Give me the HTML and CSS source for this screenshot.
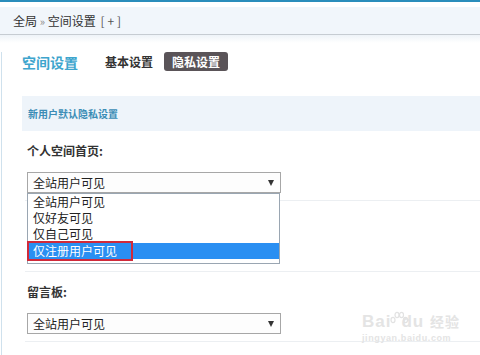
FILE: index.html
```html
<!DOCTYPE html>
<html lang="zh-CN">
  <head>
    <meta charset="UTF-8" />
    <title>空间设置 - 隐私设置</title>
    <link rel="stylesheet" href="styles.css">
  </head>
  <body>
    <div class="crumb">全局 <span class="sep">»</span> 空间设置 <span class="plus">[+]</span></div>
    <div class="crumb-shade"></div>

    <div class="main">
      <div class="tabs">
        <span class="tabs-title">空间设置</span>
        <a class="tab">基本设置</a>
        <a class="tab active">隐私设置</a>
      </div>

      <div class="section-head">新用户默认隐私设置</div>

      <div class="row">
        <div class="label">个人空间首页:</div>
        <div class="select open">
          <span>全站用户可见</span>
          <i class="arrow"></i>
          <ul class="options">
            <li>全站用户可见</li>
            <li>仅好友可见</li>
            <li>仅自己可见</li>
            <li class="selected">仅注册用户可见<b class="mark"></b></li>
          </ul>
        </div>
      </div>

      <div class="row empty"></div>

      <div class="row">
        <div class="label">留言板:</div>
        <div class="select">
          <span>全站用户可见</span>
          <i class="arrow"></i>
        </div>
      </div>
    </div>

    <div class="watermark">
      <div class="wm-logo">Bai<span class="paw">
        <svg width="20" height="14" viewBox="0 0 20 14">
          <ellipse cx="4" cy="9" rx="2" ry="2.6" fill="none" stroke="#e2e2e2" stroke-width="1.2"/>
          <ellipse cx="8" cy="4" rx="2" ry="2.6" fill="none" stroke="#e2e2e2" stroke-width="1.2"/>
          <ellipse cx="12.5" cy="4" rx="2" ry="2.6" fill="none" stroke="#e2e2e2" stroke-width="1.2"/>
          <ellipse cx="16.5" cy="9" rx="2" ry="2.6" fill="none" stroke="#e2e2e2" stroke-width="1.2"/>
        </svg></span>du <span class="wm-cn">经验</span></div>
      <div class="wm-url">jingyan.baidu.com</div>
    </div>
  </body>
</html>
```
FILE: styles.css
```css
html {
  font-family: "Noto Sans CJK SC", "Liberation Sans", sans-serif;
}

body {
  margin: 0;
  border-top: 2px solid #2a8dbb;
  background-color: #fff;
  color: #333;
  position: relative;
}

.crumb {
  margin-top: 5px;
  height: 27px;
  line-height: 27px;
  padding-left: 13px;
  font-size: 12px;
  background-color: #f1f6fb;
  border-bottom: 1px solid #c6ccd2;
  color: #333;
}

.crumb .sep {
  color: #888;
  font-size: 11px;
}

.crumb .plus {
  color: #555;
  letter-spacing: 3px;
  margin-left: 2px;
}

.crumb-shade {
  height: 8px;
  background: linear-gradient(#eef3f8, #fff);
}

.main {
  margin-left: 1px;
  border-left: 1px solid #cfe1ed;
  padding-left: 20px;
  height: 312px;
}

.tabs {
  display: flex;
  align-items: center;
  height: 19px;
  margin-top: 9px;
}

.tabs-title {
  font-size: 14px;
  font-weight: bold;
  color: #3ea5cd;
  margin-right: 27px;
}

.tab {
  font-size: 12px;
  font-weight: bold;
  color: #333;
  margin-right: 11px;
}

.tab.active {
  background-color: #5a5458;
  color: #fff;
  border-radius: 3px;
  padding: 0 8px;
  line-height: 19px;
}

.section-head {
  margin-top: 25px;
  height: 35px;
  line-height: 35px;
  padding-left: 6px;
  background-color: #eef4fa;
  font-size: 10px;
  font-weight: bold;
  color: #3b8db6;
}

.row {
  margin-left: 3px;
  padding: 13px 0 7px 2px;
  border-bottom: 1px solid #eceff2;
}

.row.empty {
  height: 50px;
}

.label {
  font-size: 12px;
  font-weight: bold;
  line-height: 14px;
  margin-bottom: 14px;
  color: #333;
}

.select {
  position: relative;
  width: 247px;
  height: 19px;
  line-height: 19px;
  border: 1px solid #a7a7a7;
  background-color: #fdfdfd;
  font-size: 12px;
  padding-left: 5px;
  color: #222;
}

.arrow {
  position: absolute;
  right: 6px;
  top: 7px;
  width: 0;
  height: 0;
  border-left: 3.5px solid transparent;
  border-right: 3.5px solid transparent;
  border-top: 6px solid #333;
}

.options {
  position: absolute;
  left: -1px;
  top: 20px;
  width: 251px;
  margin: 0;
  padding: 0 0 4px;
  list-style: none;
  background-color: #fff;
  border: 1px solid #9aa6b2;
  z-index: 2;
}

.options li {
  position: relative;
  height: 16px;
  line-height: 16px;
  padding-left: 5px;
  color: #222;
}

.options li.selected {
  background-color: #2a8ff2;
  color: #fff;
  margin-top: 1px;
}

.mark {
  position: absolute;
  left: -1px;
  top: -2px;
  width: 102px;
  height: 16px;
  border: 2px solid #d02a3a;
}

.watermark {
  position: absolute;
  left: 362px;
  top: 309px;
  color: #e4e4e4;
}

.wm-logo {
  font-family: "Liberation Sans", sans-serif;
  font-size: 17px;
  font-weight: bold;
  line-height: 20px;
  letter-spacing: 1px;
}

.paw {
  position: relative;
  display: inline-block;
  width: 10px;
}

.paw svg {
  position: absolute;
  left: -2px;
  top: -16px;
}

.wm-cn {
  font-family: "Noto Sans CJK SC", sans-serif;
  font-size: 14px;
}

.wm-url {
  font-family: "Liberation Sans", sans-serif;
  font-size: 9px;
  font-weight: bold;
  line-height: 12px;
  letter-spacing: 0.6px;
}
```
